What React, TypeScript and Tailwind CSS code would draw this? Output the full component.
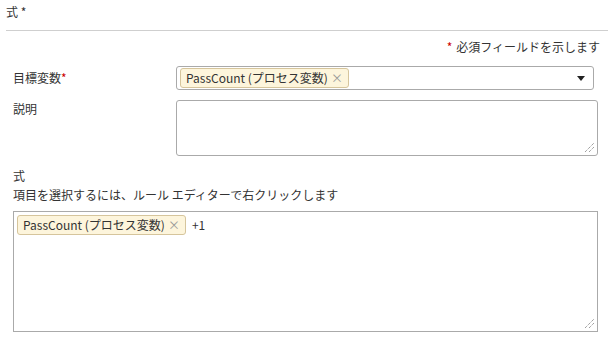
import React from "react";

function Tag() {
  return (
    <span className="inline-flex items-center h-[20px] px-[5px] rounded-[3px] border border-[#d6c59c] bg-[#fdf5dc] text-[#333] whitespace-nowrap">
      <span>PassCount (プロセス変数)</span>
      <span className="ml-[3px] text-[#999] text-[12px]">×</span>
    </span>
  );
}

function Grip() {
  return (
    <svg className="absolute right-[2px] bottom-[2px]" width="11" height="11" viewBox="0 0 11 11">
      <line x1="1" y1="10" x2="10" y2="1" stroke="#777" strokeWidth="1" strokeDasharray="1 1" />
      <line x1="5" y1="10" x2="10" y2="5" stroke="#777" strokeWidth="1" strokeDasharray="1 1" />
    </svg>
  );
}

export default function App() {
  return (
    <div
      className="w-[608px] h-[338px] bg-white text-[12px] text-[#333] overflow-hidden"
      style={{ fontFamily: '"Noto Sans CJK JP", "Noto Sans", sans-serif' }}
    >
      <div className="pl-[6px] pt-[3px] h-[30px] leading-[18px]">式 *</div>
      <div className="ml-[6px] border-t border-[#cfcfcf]" />
      <div className="flex justify-end pr-[8px] mt-[7px] h-[18px] leading-[18px]">
        <span className="text-[#c00] mr-[4px]">*</span>
        <span>必須フィールドを示します</span>
      </div>
      <div className="flex items-center mt-[10px] pl-[13px]">
        <div className="w-[163px] leading-[18px]">
          目標変数<span className="text-[#c00]">*</span>
        </div>
        <div className="flex items-center w-[418px] h-[24px] border border-[#aaa] rounded-[3px] pl-[3px] pr-[8px]">
          <Tag />
          <div className="flex-1" />
          <svg width="8" height="5" viewBox="0 0 8 5">
            <path d="M0 0 H8 L4 5 Z" fill="#222" />
          </svg>
        </div>
      </div>
      <div className="flex items-start mt-[10px] pl-[13px]">
        <div className="w-[163px] leading-[18px] pt-[0px]">説明</div>
        <div className="relative w-[422px] h-[56px] border border-[#aaa] rounded-[3px]">
          <Grip />
        </div>
      </div>
      <div className="pl-[13px] mt-[11px] h-[18px] leading-[18px]">式</div>
      <div className="pl-[13px] mt-[1px] h-[18px] leading-[18px]">項目を選択するには、ルール エディターで右クリックします</div>
      <div className="ml-[13px] mt-[7px] relative w-[585px] h-[121px] border border-[#aaa]">
        <div className="flex items-center pl-[3px] pt-[3px]">
          <Tag />
          <span className="ml-[6px]">+1</span>
        </div>
        <Grip />
      </div>
    </div>
  );
}
